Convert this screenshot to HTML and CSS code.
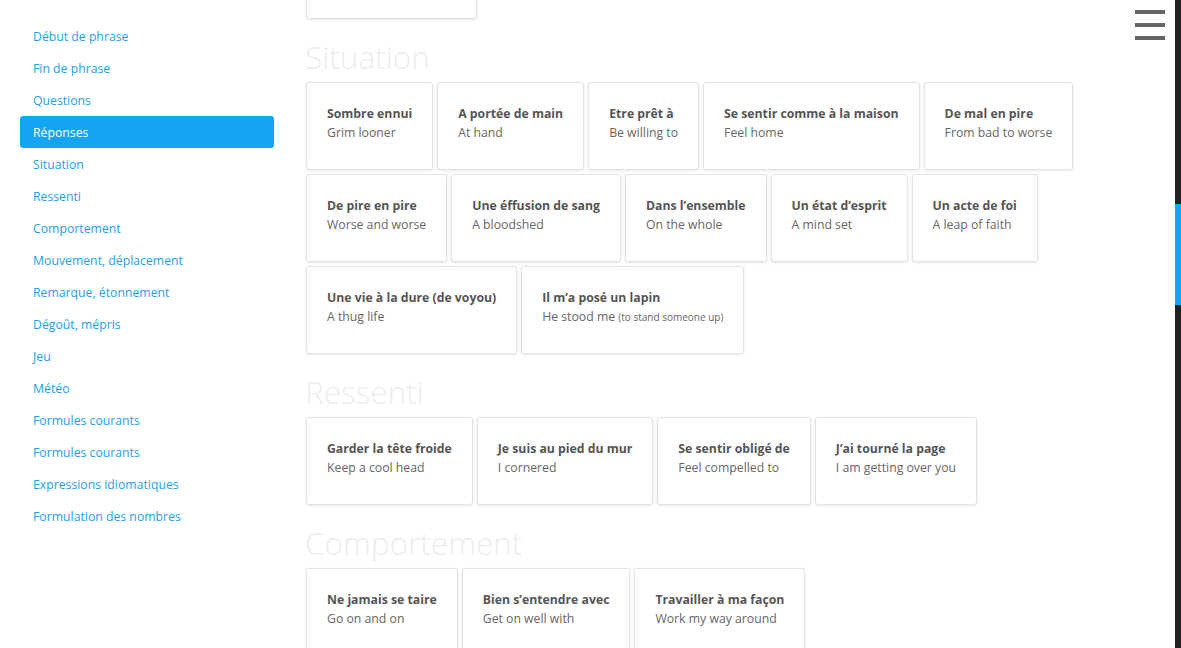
FILE: index.html
```html
<!DOCTYPE html>
<html lang="fr">
<head>
<meta charset="utf-8">
<title>Expressions</title>
<link rel="stylesheet" href="styles.css">
</head>
<body>
<div class="page">
  <nav class="sidebar">
    <a class="nav-item">Début de phrase</a>
    <a class="nav-item">Fin de phrase</a>
    <a class="nav-item">Questions</a>
    <a class="nav-item active">Réponses</a>
    <a class="nav-item">Situation</a>
    <a class="nav-item">Ressenti</a>
    <a class="nav-item">Comportement</a>
    <a class="nav-item">Mouvement, déplacement</a>
    <a class="nav-item">Remarque, étonnement</a>
    <a class="nav-item">Dégoût, mépris</a>
    <a class="nav-item">Jeu</a>
    <a class="nav-item">Météo</a>
    <a class="nav-item">Formules courants</a>
    <a class="nav-item">Formules courants</a>
    <a class="nav-item">Expressions idiomatiques</a>
    <a class="nav-item">Formulation des nombres</a>
  </nav>
  <main class="content">
    <section class="section scrolled">
      <div class="cards">
        <div class="card w-prev"></div>
      </div>
    </section>
    <section class="section">
      <h2 class="section-title">Situation</h2>
      <div class="cards">
        <div class="card"><div class="fr">Sombre ennui</div><div class="en">Grim looner</div></div>
        <div class="card"><div class="fr">A portée de main</div><div class="en">At hand</div></div>
        <div class="card"><div class="fr">Etre prêt à</div><div class="en">Be willing to</div></div>
        <div class="card"><div class="fr">Se sentir comme à la maison</div><div class="en">Feel home</div></div>
        <div class="card"><div class="fr">De mal en pire</div><div class="en">From bad to worse</div></div>
        <div class="card"><div class="fr">De pire en pire</div><div class="en">Worse and worse</div></div>
        <div class="card"><div class="fr">Une éffusion de sang</div><div class="en">A bloodshed</div></div>
        <div class="card"><div class="fr">Dans l’ensemble</div><div class="en">On the whole</div></div>
        <div class="card"><div class="fr">Un état d’esprit</div><div class="en">A mind set</div></div>
        <div class="card"><div class="fr">Un acte de foi</div><div class="en">A leap of faith</div></div>
        <div class="card"><div class="fr">Une vie à la dure (de voyou)</div><div class="en">A thug life</div></div>
        <div class="card"><div class="fr">Il m’a posé un lapin</div><div class="en">He stood me <small class="note">(to stand someone up)</small></div></div>
      </div>
    </section>
    <section class="section">
      <h2 class="section-title">Ressenti</h2>
      <div class="cards">
        <div class="card"><div class="fr">Garder la tête froide</div><div class="en">Keep a cool head</div></div>
        <div class="card"><div class="fr">Je suis au pied du mur</div><div class="en">I cornered</div></div>
        <div class="card"><div class="fr">Se sentir obligé de</div><div class="en">Feel compelled to</div></div>
        <div class="card"><div class="fr">J’ai tourné la page</div><div class="en">I am getting over you</div></div>
      </div>
    </section>
    <section class="section">
      <h2 class="section-title">Comportement</h2>
      <div class="cards">
        <div class="card"><div class="fr">Ne jamais se taire</div><div class="en">Go on and on</div></div>
        <div class="card"><div class="fr">Bien s’entendre avec</div><div class="en">Get on well with</div></div>
        <div class="card"><div class="fr">Travailler à ma façon</div><div class="en">Work my way around</div></div>
      </div>
    </section>
  </main>
  <div class="menu-area">
    <button class="burger" aria-label="Menu"><span></span><span></span><span></span></button>
  </div>
</div>
<div class="scrollbar"><div class="thumb"></div></div>
</body>
</html>
```

FILE: styles.css
```css
* { box-sizing: border-box; }
html, body { margin: 0; padding: 0; height: 100%; overflow: hidden; }
body {
  background: #fff;
  font-family: "Open Sans", "Noto Sans", sans-serif;
  font-size: 12.25px;
  color: #555;
}
.page {
  display: flex;
  align-items: flex-start;
  height: 648px;
  overflow: hidden;
}
.sidebar {
  flex: 0 0 306px;
  padding: 20px 32px 0 20px;
  display: flex;
  flex-direction: column;
}
.nav-item {
  display: block;
  height: 32px;
  padding: 2px 0 0 13px;
  line-height: 30px;
  color: #1c9fe9;
  font-size: 12.25px;
  border-radius: 3px;
  text-decoration: none;
  cursor: pointer;
}
.nav-item.active {
  background: #14a5f2;
  color: #fff;
}
.content {
  flex: 0 0 806px;
  padding-right: 4px;
}
.scrolled { margin-top: -69px; }
.section-title {
  margin: 20px 0 7px -1px;
  font-size: 31.5px;
  line-height: 36px;
  font-weight: 300;
  color: #ececec;
}
.cards {
  display: flex;
  flex-wrap: wrap;
  gap: 4px;
}
.card {
  height: 88px;
  padding: 21px 20px 0 20px;
  border: 1px solid #e2e2e2;
  border-radius: 3px;
  box-shadow: 0 1px 3px rgba(0, 0, 0, 0.09);
  background: #fff;
  white-space: nowrap;
}
.w-prev { width: 171px; }
.fr {
  font-weight: 700;
  color: #555;
  line-height: 19px;
}
.en {
  color: #666;
  line-height: 19px;
}
.note { font-size: 10px; }
.menu-area {
  flex: 1;
  display: flex;
  justify-content: flex-end;
  padding: 10px 16px 0 0;
}
.burger {
  width: 30px;
  height: 30px;
  padding: 0;
  border: 0;
  background: transparent;
  display: flex;
  flex-direction: column;
  justify-content: space-between;
  cursor: pointer;
}
.burger span {
  display: block;
  height: 4px;
  background: #666;
}
.scrollbar {
  position: fixed;
  top: 0;
  right: 0;
  width: 6px;
  height: 648px;
  background: #222;
}
.thumb {
  margin-top: 204px;
  height: 101px;
  background: #14a5f2;
}
```
